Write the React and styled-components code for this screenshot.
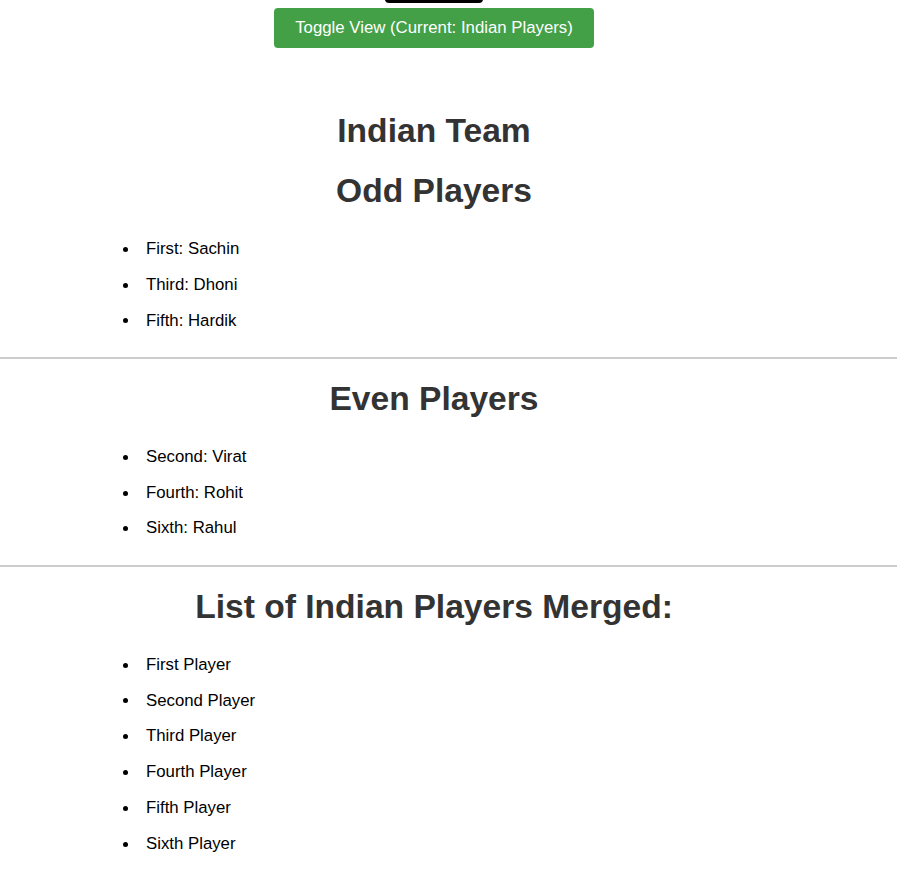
import React from 'react';
import styled, { createGlobalStyle } from 'styled-components';

const GlobalStyle = createGlobalStyle`
  html, body {
    margin: 0;
    padding: 0;
    background: #ffffff;
    font-family: "Liberation Sans", Arial, sans-serif;
  }
`;

const Page = styled.div`
  display: flex;
  flex-direction: column;
  width: 897px;
  padding-bottom: 40px;
`;

const Column = styled.div`
  width: 868px;
  display: flex;
  flex-direction: column;
  align-items: center;
`;

const TopTab = styled.div`
  width: 98px;
  height: 4px;
  margin-top: -1px;
  background: #000000;
  border-radius: 0 0 8px 8px;
`;

const ToggleButton = styled.button`
  margin-top: 5px;
  height: 40px;
  padding: 0 21px;
  border: none;
  border-radius: 4px;
  background: #43a047;
  color: #ffffff;
  font-family: "Liberation Sans", Arial, sans-serif;
  font-size: 16.8px;
  cursor: pointer;
`;

const Heading = styled.h1`
  width: 868px;
  margin: ${p => p.$top}px 0 0;
  font-size: 33.6px;
  line-height: 38px;
  font-weight: 700;
  color: #333333;
  text-align: center;
`;

const List = styled.ul`
  list-style: none;
  margin: 21px 0 0 123px;
  padding: 0;
`;

const Item = styled.li`
  display: flex;
  align-items: center;
  padding: 8px 0;
  line-height: 19.8px;
  font-size: 16.8px;
  color: #000000;
`;

const Bullet = styled.span`
  width: 5px;
  height: 5px;
  margin: 1px 18px 0 0;
  border-radius: 50%;
  background: #000000;
  flex-shrink: 0;
`;

const Divider = styled.hr`
  width: 897px;
  margin: 18.5px 0 0;
  border: none;
  border-top: 2px solid #cccccc;
  height: 0;
`;

const odd = ['First: Sachin', 'Third: Dhoni', 'Fifth: Hardik'];
const even = ['Second: Virat', 'Fourth: Rohit', 'Sixth: Rahul'];
const merged = ['First Player', 'Second Player', 'Third Player', 'Fourth Player', 'Fifth Player', 'Sixth Player'];

function PlayerList({ items }) {
  return (
    <List>
      {items.map(name => (
        <Item key={name}><Bullet />{name}</Item>
      ))}
    </List>
  );
}

export default function App() {
  return (
    <Page>
      <GlobalStyle />
      <Column>
        <TopTab />
        <ToggleButton>Toggle View (Current: Indian Players)</ToggleButton>
      </Column>
      <Heading $top={64}>Indian Team</Heading>
      <Heading $top={22}>Odd Players</Heading>
      <PlayerList items={odd} />
      <Divider />
      <Heading $top={21}>Even Players</Heading>
      <PlayerList items={even} />
      <Divider />
      <Heading $top={21}>List of Indian Players Merged:</Heading>
      <PlayerList items={merged} />
    </Page>
  );
}
